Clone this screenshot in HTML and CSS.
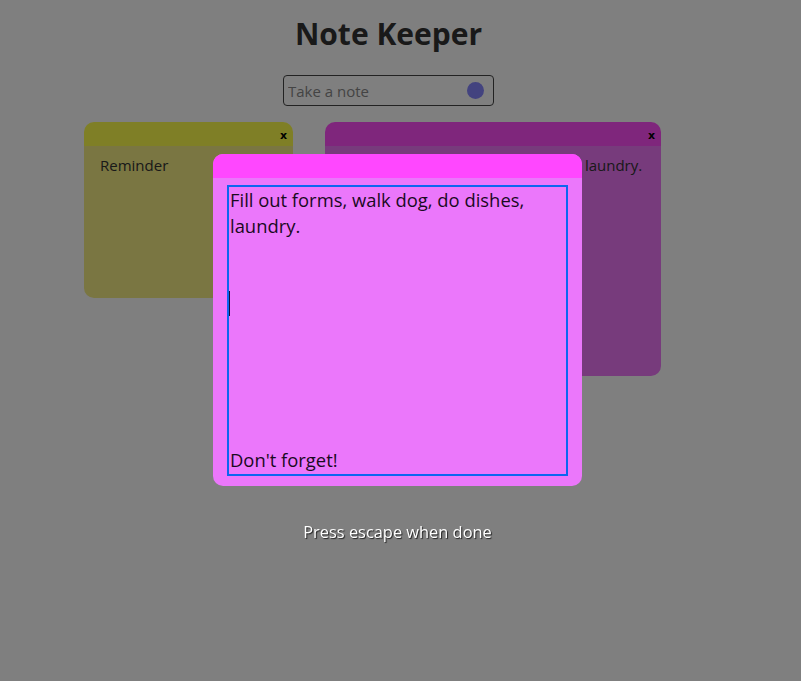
FILE: index.html
```html
<!DOCTYPE html>
<html lang="en">
<head>
<meta charset="utf-8">
<title>Note Keeper</title>
<link rel="stylesheet" href="styles.css">
</head>
<body>
<div class="app">
  <h1 class="title">Note Keeper</h1>
  <form class="new-note">
    <input class="new-note-input" type="text" placeholder="Take a note">
    <span class="new-note-dot"></span>
  </form>
  <div class="notes">
    <div class="note note-yellow note-small">
      <div class="note-head"><button class="note-close" type="button">x</button></div>
      <div class="note-body">Reminder</div>
    </div>
    <div class="note note-purple note-large">
      <div class="note-head"><button class="note-close" type="button">x</button></div>
      <div class="note-body">Fill out forms, walk dog, do dishes, laundry.</div>
    </div>
  </div>
</div>
<div class="overlay">
  <div class="modal">
    <div class="modal-head"></div>
    <div class="modal-body">
      <div class="editor-wrap">
        <textarea class="editor">Fill out forms, walk dog, do dishes,
laundry.








Don't forget!</textarea>
        <span class="caret"></span>
      </div>
    </div>
  </div>
  <p class="hint">Press escape when done</p>
</div>
</body>
</html>
```

FILE: styles.css
```css
* { box-sizing: border-box; }
html, body { margin: 0; height: 100%; }
body {
  background: #ffffff;
  font-family: "Open Sans", "Noto Sans", sans-serif;
  color: #333333;
}
.app {
  display: flex;
  flex-direction: column;
}
.title {
  margin: 14px 0 0 0;
  align-self: center;
  transform: translateX(-12px);
  font-size: 30px;
  line-height: 40px;
  font-weight: 700;
  color: #333333;
}
.new-note {
  align-self: center;
  transform: translateX(-12px);
  margin-top: 21px;
  width: 211px;
  height: 31px;
  border: 1px solid #444444;
  border-radius: 4px;
  display: flex;
  align-items: center;
  padding: 0 9px 0 4px;
}
.new-note-input {
  flex: 1;
  min-width: 0;
  border: none;
  background: transparent;
  font-family: inherit;
  font-size: 15px;
  color: #333;
  padding: 0;
  outline: none;
}
.new-note-input::placeholder { color: #888888; }
.new-note-dot {
  width: 17px;
  height: 17px;
  border-radius: 50%;
  background: #8686ff;
}
.notes {
  display: flex;
  align-items: flex-start;
  gap: 32px;
  padding-left: 84px;
  margin-top: 16px;
}
.note {
  border-radius: 10px;
  overflow: hidden;
}
.note-small { width: 209px; height: 176px; }
.note-large { width: 336px; height: 254px; }
.note-yellow .note-head { background: #ffff4c; }
.note-yellow .note-body { background: #f4ec84; }
.note-purple .note-head { background: #ff4cf8; }
.note-purple .note-body { background: #ee76f8; }
.note-head {
  height: 24px;
  display: flex;
  justify-content: flex-end;
  align-items: center;
  padding-right: 6px;
}
.note-close {
  border: none;
  background: transparent;
  font-family: "DejaVu Sans", sans-serif;
  font-weight: 700;
  font-size: 11px;
  color: #000;
  padding: 0;
  line-height: 1;
  margin-top: 2px;
}
.note-body {
  height: calc(100% - 24px);
  padding: 8px 16px;
  font-size: 15px;
  line-height: 22px;
  color: #333333;
}
.overlay {
  position: fixed;
  inset: 0;
  background: rgba(0, 0, 0, 0.5);
  display: flex;
  flex-direction: column;
  align-items: center;
  padding-top: 154px;
}
.modal {
  transform: translateX(-3px);
  width: 369px;
  height: 332px;
  border-radius: 10px;
  overflow: hidden;
  background: #eb77fb;
}
.modal-head {
  height: 24px;
  background: #ff47ff;
}
.modal-body {
  padding: 7px 14px 10px 14px;
}
.editor-wrap {
  position: relative;
}
.editor {
  display: block;
  width: 341px;
  height: 291px;
  border: 2px solid #0b66f0;
  background: transparent;
  resize: none;
  padding: 0 0 0 1px;
  margin: 0;
  font-family: "Open Sans", "Noto Sans", sans-serif;
  font-size: 18.4px;
  line-height: 26px;
  color: #1a0a1e;
  overflow: hidden;
  outline: none;
}
.caret {
  position: absolute;
  left: 2px;
  top: 106px;
  width: 1px;
  height: 25px;
  background: #150a40;
}
.hint {
  margin: 34px 0 0 0;
  transform: translateX(-3px);
  font-size: 16.4px;
  line-height: 24px;
  color: #ffffff;
  text-shadow: 1px 1px 1px #222;
}
```
